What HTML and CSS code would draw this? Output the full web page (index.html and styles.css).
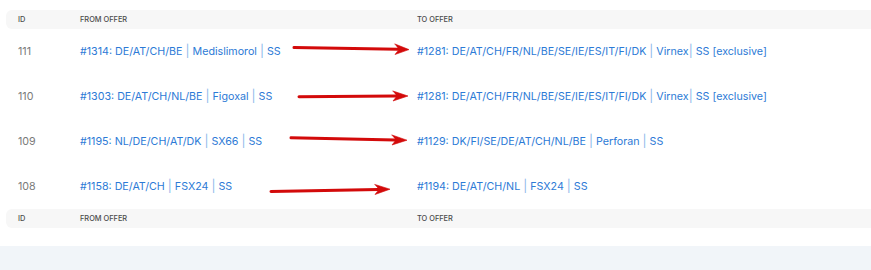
FILE: index.html
```html
<!DOCTYPE html>
<html>
<head>
<meta charset="utf-8">
<link rel="stylesheet" href="styles.css">
</head>
<body>
<div class="card">
  <div class="table">
    <div class="thead">
      <span>ID</span><span>From offer</span><span>To offer</span>
    </div>
    <div class="row">
      <span class="id">111</span>
      <a class="link">#1314: DE/AT/CH/BE <i>|</i> Medislimorol <i>|</i> SS</a>
      <a class="link">#1281: DE/AT/CH/FR/NL/BE/SE/IE/ES/IT/FI/DK <i>|</i> Virnex<i>|</i> SS [exclusive]</a>
    </div>
    <div class="row">
      <span class="id">110</span>
      <a class="link">#1303: DE/AT/CH/NL/BE <i>|</i> Figoxal <i>|</i> SS</a>
      <a class="link">#1281: DE/AT/CH/FR/NL/BE/SE/IE/ES/IT/FI/DK <i>|</i> Virnex<i>|</i> SS [exclusive]</a>
    </div>
    <div class="row">
      <span class="id">109</span>
      <a class="link">#1195: NL/DE/CH/AT/DK <i>|</i> SX66 <i>|</i> SS</a>
      <a class="link">#1129: DK/FI/SE/DE/AT/CH/NL/BE <i>|</i> Perforan <i>|</i> SS</a>
    </div>
    <div class="row">
      <span class="id">108</span>
      <a class="link">#1158: DE/AT/CH <i>|</i> FSX24 <i>|</i> SS</a>
      <a class="link">#1194: DE/AT/CH/NL <i>|</i> FSX24 <i>|</i> SS</a>
    </div>
    <div class="thead">
      <span>ID</span><span>From offer</span><span>To offer</span>
    </div>
    <svg class="arrows" width="871" height="246" viewBox="0 0 871 246">
      <g fill="#d30a0a" stroke="#d30a0a" stroke-linecap="round">
        <line x1="294" y1="47.5" x2="398" y2="49.3" stroke-width="3"/>
        <polygon points="395,44 409,49.6 395,54.5 399,49.4" stroke-width="0.6"/>
        <line x1="299" y1="96.8" x2="396" y2="96" stroke-width="3"/>
        <polygon points="393,91 408,96 393,101 397,96" stroke-width="0.6"/>
        <line x1="291" y1="137.8" x2="395" y2="140" stroke-width="3"/>
        <polygon points="392,135 407,140.2 392,145 396,140" stroke-width="0.6"/>
        <line x1="271" y1="191.5" x2="378" y2="189.4" stroke-width="3"/>
        <polygon points="375,184.5 390,189.2 375,194.5 379,189.4" stroke-width="0.6"/>
      </g>
    </svg>
  </div>
</div>
<div class="below"></div>
</body>
</html>
```
FILE: styles.css
```css
html, body {
  margin: 0;
  padding: 0;
}
body {
  width: 871px;
  height: 270px;
  overflow: hidden;
  background: #f1f5f9;
  font-family: Inter, "Noto Sans", sans-serif;
}
.card {
  background: #ffffff;
  padding: 10px 0 18px 6px;
  height: 218px;
}
.table {
  position: relative;
}
.thead,
.row {
  display: grid;
  grid-template-columns: 62px 337px 1fr;
  padding-left: 12px;
  align-items: center;
}
.thead {
  height: 19px;
  background: #f7f7f7;
  border-radius: 6px 0 0 6px;
  font-size: 7.4px;
  font-weight: 500;
  color: #4b4b4b;
  text-transform: uppercase;
}
.row {
  height: 45px;
}
.id {
  font-size: 10.7px;
  color: #7a7a7a;
}
.link {
  font-size: 10.7px;
  color: #2c7ad6;
  white-space: nowrap;
}
.link i {
  font-style: normal;
  font-size: 12px;
  line-height: 1;
  color: #8cb8ea;
}
.arrows {
  position: absolute;
  left: -6px;
  top: -10px;
  pointer-events: none;
}
.below {
  height: 24px;
}
```
